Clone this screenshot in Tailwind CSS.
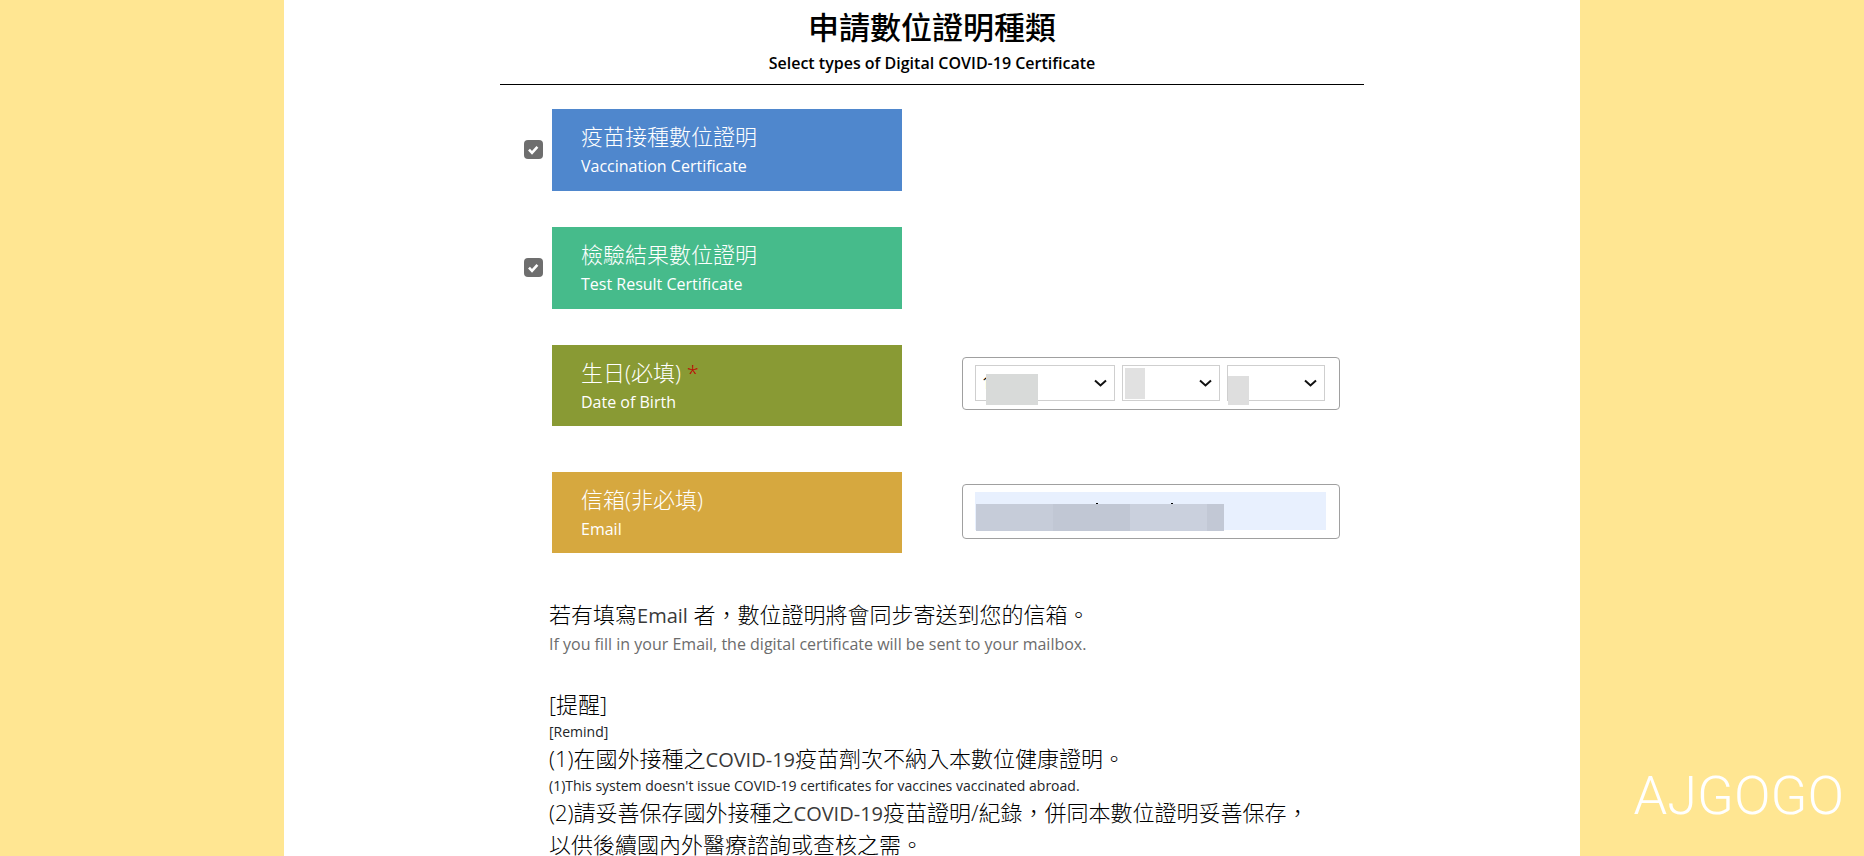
<!DOCTYPE html>
<html lang="zh-Hant">
<head>
<meta charset="utf-8">
<meta name="viewport" content="width=device-width, initial-scale=1">
<title>申請數位證明種類</title>
<script src="https://cdn.jsdelivr.net/npm/@tailwindcss/browser@4"></script>
</head>
<body class="min-h-screen overflow-x-hidden bg-[#ffe692] font-['Open_Sans','Noto_Sans_CJK_TC',sans-serif] text-[#212529]">
<main class="mx-auto min-h-screen max-w-[1296px] bg-white">
  <div class="mx-auto w-full max-w-[864px]">
    <header class="border-b border-black pt-1 pb-2 text-center text-black">
      <h1 class="text-[31px] leading-[46px] font-medium">申請數位證明種類</h1>
      <p class="text-base leading-[26px] font-semibold">Select types of Digital COVID-19 Certificate</p>
    </header>

    <form class="pt-6 pr-6 pl-6">
      <div class="flex items-center">
        <span class="relative mr-[9px] mb-0.5 flex h-[19px] w-[19px]">
          <input id="vac" type="checkbox" checked class="h-[19px] w-[19px] appearance-none rounded-[4px] bg-[#6e6e6e]">
          <svg class="pointer-events-none absolute inset-0" width="19" height="19" viewBox="0 0 19 19" fill="none" stroke="#fff" stroke-width="2.6"><path d="M5 9.6l3 3.2 5.4-6"/></svg>
        </span>
        <label for="vac" class="block w-[350px] bg-[#4f87cd] pt-[11px] pb-[11px] pl-[29px] text-white">
          <span class="block text-[22px] leading-[32px] font-light">疫苗接種數位證明</span>
          <span class="block text-base leading-[28px]">Vaccination Certificate</span>
        </label>
      </div>

      <div class="mt-9 flex items-center">
        <span class="relative mr-[9px] mb-0.5 flex h-[19px] w-[19px]">
          <input id="test" type="checkbox" checked class="h-[19px] w-[19px] appearance-none rounded-[4px] bg-[#6e6e6e]">
          <svg class="pointer-events-none absolute inset-0" width="19" height="19" viewBox="0 0 19 19" fill="none" stroke="#fff" stroke-width="2.6"><path d="M5 9.6l3 3.2 5.4-6"/></svg>
        </span>
        <label for="test" class="block w-[350px] bg-[#46bb8b] pt-[11px] pb-[11px] pl-[29px] text-white">
          <span class="block text-[22px] leading-[32px] font-light">檢驗結果數位證明</span>
          <span class="block text-base leading-[28px]">Test Result Certificate</span>
        </label>
      </div>

      <div class="mt-9 flex items-start justify-between pl-7">
        <label for="year" class="block w-[350px] bg-[#899a34] pt-[11px] pb-2.5 pl-[29px] text-white">
          <span class="block text-[22px] leading-[32px] font-light">生日(必填) <span class="text-[#c00000]">*</span></span>
          <span class="block text-base leading-[28px]">Date of Birth</span>
        </label>
        <div class="mt-3 flex h-[53px] w-[378px] gap-[7px] rounded-[4px] border border-[#a0a0a0] px-3 pt-[7px]">
          <div class="relative h-9 w-[140px]">
            <select id="year" aria-label="Year" class="h-9 w-full appearance-none border border-[#cfcfcf] bg-white pl-[6px] text-base text-black"><option>1</option></select>
            <svg class="pointer-events-none absolute top-[14px] right-2" width="13" height="9" viewBox="0 0 13 9" fill="none" stroke="#111" stroke-width="2"><path d="M1 1.500l5.500 5 5.500-5"/></svg>
            <span class="absolute top-[9px] left-[11px] h-[31px] w-[52px] bg-[#d8dad9]"></span>
          </div>
          <div class="relative h-9 w-[98px]">
            <select aria-label="Month" class="h-9 w-full appearance-none border border-[#cfcfcf] bg-white"><option></option></select>
            <svg class="pointer-events-none absolute top-[14px] right-2" width="13" height="9" viewBox="0 0 13 9" fill="none" stroke="#111" stroke-width="2"><path d="M1 1.500l5.500 5 5.500-5"/></svg>
            <span class="absolute top-[3px] left-[3px] h-[31px] w-5 bg-[#e1e1e1]"></span>
          </div>
          <div class="relative h-9 w-[98px]">
            <select aria-label="Day" class="h-9 w-full appearance-none border border-[#cfcfcf] bg-white"><option></option></select>
            <svg class="pointer-events-none absolute top-[14px] right-2" width="13" height="9" viewBox="0 0 13 9" fill="none" stroke="#111" stroke-width="2"><path d="M1 1.500l5.500 5 5.500-5"/></svg>
            <span class="absolute top-[11px] left-px h-[29px] w-[21px] bg-[#dedede]"></span>
          </div>
        </div>
      </div>

      <div class="mt-[46px] flex items-start justify-between pl-7">
        <label for="email" class="block w-[350px] bg-[#d6a83f] pt-[11px] pb-2.5 pl-[29px] text-white">
          <span class="block text-[22px] leading-[32px] font-light">信箱(非必填)</span>
          <span class="block text-base leading-[28px]">Email</span>
        </label>
        <div class="mt-3 h-[55px] w-[378px] rounded-[4px] border border-[#a0a0a0] px-3 pt-[7px]">
          <div class="relative h-[38px] w-[351px]">
            <input id="email" type="email" class="h-[38px] w-full bg-[#e8f0fe]">
            <span class="absolute top-[11px] left-[121px] h-px w-[2px] bg-black"></span>
            <span class="absolute top-[11px] left-[196px] h-px w-[2px] bg-black"></span>
            <span class="absolute top-3 left-px flex h-[27px]">
              <span class="w-[77px] bg-[#c6ccd9]"></span><span class="w-[77px] bg-[#c1c7d4]"></span><span class="w-[77px] bg-[#cad0dd]"></span><span class="w-[17px] bg-[#c2c8d5]"></span>
            </span>
          </div>
        </div>
      </div>
    </form>

    <section class="pt-[45px] pl-[49px] text-[22px] leading-[32px] font-light">
      <p class="text-black">若有填寫<span class="text-xl leading-none font-normal text-[#3a3a3a]">Email</span> 者，數位證明將會同步寄送到您的信箱。</p>
      <p class="text-base leading-[28px] font-normal text-[#6c6c6c]">If you fill in your Email, the digital certificate will be sent to your mailbox.</p>
      <p class="mt-[30px] text-black">[提醒]</p>
      <p class="pt-0.5 text-sm leading-5 font-normal">[Remind]</p>
      <p class="text-black">(1)在國外接種之<span class="text-xl leading-none font-normal text-[#3a3a3a]">COVID-19</span>疫苗劑次不納入本數位健康證明。</p>
      <p class="pt-0.5 text-sm leading-5 font-normal">(1)This system doesn't issue COVID-19 certificates for vaccines vaccinated abroad.</p>
      <p class="text-black">(2)請妥善保存國外接種之<span class="text-xl leading-none font-normal text-[#3a3a3a]">COVID-19</span>疫苗證明/紀錄，併同本數位證明妥善保存，<br>以供後續國內外醫療諮詢或查核之需。</p>
    </section>
  </div>
</main>
<div class="fixed right-5 bottom-4 font-['Roboto',sans-serif] text-[54px] leading-[88px] font-light text-white">AJGOGO</div>
</body>
</html>
